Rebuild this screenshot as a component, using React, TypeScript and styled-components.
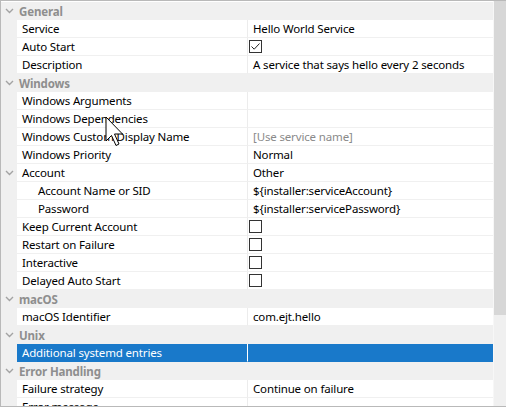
import React from "react";
import styled, { createGlobalStyle } from "styled-components";

const GlobalStyle = createGlobalStyle`
  html, body {
    margin: 0;
    padding: 0;
    background: #ffffff;
  }
  body {
    font-family: "Noto Sans", "Open Sans", sans-serif;
    font-size: 11.5px;
    letter-spacing: -0.15px;
    color: #000000;
  }
`;

type Prop = {
  kind: "prop";
  name: string;
  value?: string;
  placeholder?: boolean;
  check?: boolean;
  indent?: boolean;
  expander?: boolean;
  selected?: boolean;
};
type Category = { kind: "cat"; name: string };
type Row = Prop | Category;

const rows: Row[] = [
  { kind: "cat", name: "General" },
  { kind: "prop", name: "Service", value: "Hello World Service" },
  { kind: "prop", name: "Auto Start", check: true },
  { kind: "prop", name: "Description", value: "A service that says hello every 2 seconds" },
  { kind: "cat", name: "Windows" },
  { kind: "prop", name: "Windows Arguments" },
  { kind: "prop", name: "Windows Dependencies" },
  { kind: "prop", name: "Windows Custom Display Name", value: "[Use service name]", placeholder: true },
  { kind: "prop", name: "Windows Priority", value: "Normal" },
  { kind: "prop", name: "Account", value: "Other", expander: true },
  { kind: "prop", name: "Account Name or SID", value: "${installer:serviceAccount}", indent: true },
  { kind: "prop", name: "Password", value: "${installer:servicePassword}", indent: true },
  { kind: "prop", name: "Keep Current Account", check: false },
  { kind: "prop", name: "Restart on Failure", check: false },
  { kind: "prop", name: "Interactive", check: false },
  { kind: "prop", name: "Delayed Auto Start", check: false },
  { kind: "cat", name: "macOS" },
  { kind: "prop", name: "macOS Identifier", value: "com.ejt.hello" },
  { kind: "cat", name: "Unix" },
  { kind: "prop", name: "Additional systemd entries", selected: true },
  { kind: "cat", name: "Error Handling" },
  { kind: "prop", name: "Failure strategy", value: "Continue on failure" },
  { kind: "prop", name: "Error message" },
];

const Frame = styled.div`
  position: relative;
  box-sizing: border-box;
  width: 506px;
  height: 407px;
  border: 1px solid #b9b9b9;
  border-right: none;
  display: flex;
  overflow: hidden;
  background: #ffffff;
`;

const Sheet = styled.div`
  flex: 1;
  display: flex;
  flex-direction: column;
  padding-top: 1px;
  overflow: hidden;
`;

const CategoryRow = styled.div`
  flex: none;
  height: 18px;
  display: flex;
  align-items: center;
  background: #f0f0f0;
  color: #8e8e8e;
  font-weight: 700;
`;

const Gutter = styled.div`
  width: 16px;
  height: 100%;
  display: flex;
  align-items: center;
  justify-content: center;
  background: #f0f0f0;
  flex: none;
`;

const CategoryLabel = styled.span`
  padding-left: 2px;
`;

const PropRow = styled.div<{ $selected?: boolean }>`
  flex: none;
  height: 18px;
  display: grid;
  grid-template-columns: 16px 231px 1fr;
  background: ${({ $selected }) => ($selected ? "#1979ca" : "#ffffff")};
  color: ${({ $selected }) => ($selected ? "#ffffff" : "#000000")};
`;

const NameCell = styled.div<{ $indent?: boolean; $selected?: boolean }>`
  box-sizing: border-box;
  display: flex;
  align-items: center;
  padding-left: ${({ $indent }) => ($indent ? "21px" : "5px")};
  border-right: 1px solid ${({ $selected }) => ($selected ? "#ffffff" : "#ececec")};
  border-bottom: 1px solid ${({ $selected }) => ($selected ? "#1979ca" : "#f0f0f0")};
  white-space: nowrap;
  overflow: hidden;
`;

const ValueCell = styled.div<{ $placeholder?: boolean; $selected?: boolean }>`
  box-sizing: border-box;
  display: flex;
  align-items: center;
  padding-left: 5px;
  border-bottom: 1px solid ${({ $selected }) => ($selected ? "#1979ca" : "#f0f0f0")};
  color: ${({ $placeholder }) => ($placeholder ? "#8a8a8a" : "inherit")};
  white-space: nowrap;
  overflow: hidden;
`;

const CheckBox = styled.span`
  box-sizing: border-box;
  width: 13px;
  height: 13px;
  margin-left: -4px;
  border: 1px solid #333333;
  background: #ffffff;
  display: flex;
  align-items: center;
  justify-content: center;
`;

const ScrollTrack = styled.div`
  flex: none;
  width: 12px;
  display: flex;
  flex-direction: column;
  background: #f0f0f0;
  border-left: 1px solid #f7f7f7;
`;

const ScrollThumb = styled.div`
  height: 314px;
  background: #d7d7d7;
`;

const Pointer = styled.svg`
  position: absolute;
  left: 104px;
  top: 115px;
  pointer-events: none;
`;

const Chevron = () => (
  <svg width="9" height="6" viewBox="0 0 9 6">
    <path d="M1 1 L4.5 4.5 L8 1" fill="none" stroke="#a3a3a3" strokeWidth="1.4" />
  </svg>
);

const CheckMark = () => (
  <svg width="11" height="11" viewBox="0 0 11 11">
    <path d="M1.5 5.5 L4.2 8.2 L9.5 2.5" fill="none" stroke="#222222" strokeWidth="1" />
  </svg>
);

export default function App() {
  return (
    <>
      <GlobalStyle />
      <Frame>
        <Sheet>
          {rows.map((r, i) =>
            r.kind === "cat" ? (
              <CategoryRow key={i}>
                <Gutter>
                  <Chevron />
                </Gutter>
                <CategoryLabel>{r.name}</CategoryLabel>
              </CategoryRow>
            ) : (
              <PropRow key={i} $selected={r.selected}>
                <Gutter>{r.expander && <Chevron />}</Gutter>
                <NameCell $indent={r.indent} $selected={r.selected}>
                  {r.name}
                </NameCell>
                <ValueCell $placeholder={r.placeholder} $selected={r.selected}>
                  {r.check !== undefined ? (
                    <CheckBox>{r.check && <CheckMark />}</CheckBox>
                  ) : (
                    r.value
                  )}
                </ValueCell>
              </PropRow>
            )
          )}
        </Sheet>
        <ScrollTrack>
          <ScrollThumb />
        </ScrollTrack>
        <Pointer width="20" height="32" viewBox="0 0 20 32">
          <path
            d="M1 1 L1 25 L6.5 19.5 L11 29.5 L14 28 L9.5 18 L17.5 18 Z"
            fill="#ffffff"
            stroke="#000000"
            strokeWidth="1"
            strokeLinejoin="miter"
          />
        </Pointer>
      </Frame>
    </>
  );
}
